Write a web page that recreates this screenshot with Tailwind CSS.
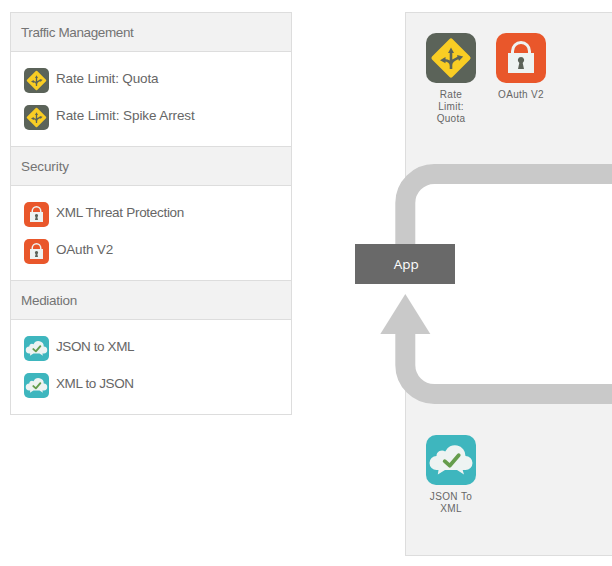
<!DOCTYPE html>
<html lang="en">
<head>
<meta charset="utf-8">
<title>API Proxy Policies</title>
<script src="https://cdn.jsdelivr.net/npm/@tailwindcss/browser@4"></script>
</head>
<body class="h-[566px] w-[612px] overflow-hidden bg-white font-['Liberation_Sans',Arial,sans-serif] text-[#666]">
<svg class="hidden">
  <symbol id="sign" viewBox="0 0 50 50">
    <rect width="50" height="50" rx="10" fill="#5b6359"/>
    <rect x="10.600" y="10.600" width="28.800" height="28.800" rx="2" fill="#f9cd24" transform="rotate(45 25 25)"/>
    <path d="M25 36V19M25 33C25 28.500 22 27.200 18 27.200M25 32C25 27.500 29 26.500 33 24.500" fill="none" stroke="#5b6359" stroke-width="2.600"/>
    <path d="M25 14.500l3 5.500h-6zM14 27.200l5.500-3.200v6.200zM37.200 23.500l-6.200-1.500 2 6z" fill="#5b6359"/>
  </symbol>
  <symbol id="lock" viewBox="0 0 50 50">
    <rect width="50" height="50" rx="10" fill="#e9572b"/>
    <path d="M16.500 21v-2.800a8.500 8.700 0 0 1 17 0V21" fill="none" stroke="#eef3f2" stroke-width="3"/>
    <path d="M12 20h26v20H12z" fill="#eef3f2"/>
    <path d="M25 24a3.200 3.200 0 0 1 1.700 5.900L28 36h-6l1.300-6.100A3.200 3.200 0 0 1 25 24z" fill="#5b6359"/>
  </symbol>
  <symbol id="cloud" viewBox="0 0 50 50">
    <rect width="50" height="50" rx="10" fill="#3eb6be"/>
    <path d="M10.500 21A5.500 5.500 0 0 1 19.200 16.500A10.600 10.600 0 0 1 39.500 21A7 7 0 0 1 39.500 35H36.700L38 39.500L31 35H19L11.800 39.500L12.500 35H10.500A7 7 0 0 1 10.500 21z" fill="#eef3f2"/>
    <path d="M18.700 26.200l5 4.500L32.700 20.300" fill="none" stroke="#659d4c" stroke-width="3.800" stroke-linecap="round" stroke-linejoin="round"/>
  </symbol>
</svg>
<main class="flex pl-[10px] pt-3">
  <aside class="h-[403px] w-[282px] shrink-0 border border-[#ddd] text-[13.5px] leading-[18px]">
    <section class="h-[134px]">
      <h2 class="flex h-[39px] items-center border-b border-[#ddd] bg-[#f2f2f2] pl-[10px] pt-px tracking-[-0.380px] text-[#747474]">Traffic Management</h2>
      <ul class="flex flex-col gap-3 pl-[13px] pt-4">
        <li class="flex h-[25px] gap-[7px]"><svg class="size-[25px] shrink-0"><use href="#sign"/></svg><span class="mt-[2px] tracking-[-0.160px]">Rate Limit: Quota</span></li>
        <li class="flex h-[25px] gap-[7px]"><svg class="size-[25px] shrink-0"><use href="#sign"/></svg><span class="mt-[2px] tracking-[-0.100px]">Rate Limit: Spike Arrest</span></li>
      </ul>
    </section>
    <section class="-mt-px h-[135px]">
      <h2 class="flex h-10 items-center border-y border-[#ddd] bg-[#f2f2f2] pl-[10px] pt-px tracking-[-0.100px] text-[#747474]">Security</h2>
      <ul class="flex flex-col gap-3 pl-[13px] pt-4">
        <li class="flex h-[25px] gap-[7px]"><svg class="size-[25px] shrink-0"><use href="#lock"/></svg><span class="mt-[2px] tracking-[-0.300px]">XML Threat Protection</span></li>
        <li class="flex h-[25px] gap-[7px]"><svg class="size-[25px] shrink-0"><use href="#lock"/></svg><span class="mt-[2px] tracking-[-0.200px]">OAuth V2</span></li>
      </ul>
    </section>
    <section class="-mt-px">
      <h2 class="flex h-10 items-center border-y border-[#ddd] bg-[#f2f2f2] pl-[10px] pt-px tracking-[-0.300px] text-[#747474]">Mediation</h2>
      <ul class="flex flex-col gap-3 pl-[13px] pt-4">
        <li class="flex h-[25px] gap-[7px]"><svg class="size-[25px] shrink-0"><use href="#cloud"/></svg><span class="mt-[2px] tracking-[-0.400px]">JSON to XML</span></li>
        <li class="flex h-[25px] gap-[7px]"><svg class="size-[25px] shrink-0"><use href="#cloud"/></svg><span class="mt-[2px] tracking-[-0.400px]">XML to JSON</span></li>
      </ul>
    </section>
  </aside>
  <div class="relative ml-[113px] flex h-[544px] w-[207px] shrink-0 flex-col justify-between text-center text-[10px] leading-3">
    <div class="flex h-[170px] gap-5 border-l border-t border-[#ddd] bg-[#f2f2f2] pl-5 pt-5">
      <div class="w-[50px]"><svg class="size-[50px]"><use href="#sign"/></svg><p class="mt-[6px] tracking-[0.300px]">Rate<br>Limit:<br>Quota</p></div>
      <div class="w-[50px]"><svg class="size-[50px]"><use href="#lock"/></svg><p class="mt-[6px] whitespace-nowrap tracking-[0.300px]">OAuth V2</p></div>
    </div>
    <div class="h-[169px] border-b border-l border-[#ddd] bg-[#f2f2f2] pl-5 pt-12">
      <div class="w-[50px]"><svg class="size-[50px]"><use href="#cloud"/></svg><p class="mt-[6px] whitespace-nowrap tracking-[0.350px]">JSON To<br>XML</p></div>
    </div>
    <svg class="absolute -left-[50px] top-[152px] h-[240px] w-[257px]" viewBox="355 164 257 240">
      <path d="M612 174H434.300A29 29 0 0 0 405.300 203V250M612 394H434.300A29 29 0 0 1 405.300 365V330" fill="none" stroke="#c9c9c9" stroke-width="20"/>
      <path d="M405.300 294L430.300 334H380.300z" fill="#c9c9c9"/>
    </svg>
    <div class="absolute -left-[49.700px] top-[232px] flex h-10 w-[100px] items-center justify-center bg-[#696969] pl-[2px] font-['Open_Sans',sans-serif] text-[13.500px] text-white">App</div>
  </div>
</main>
</body>
</html>
